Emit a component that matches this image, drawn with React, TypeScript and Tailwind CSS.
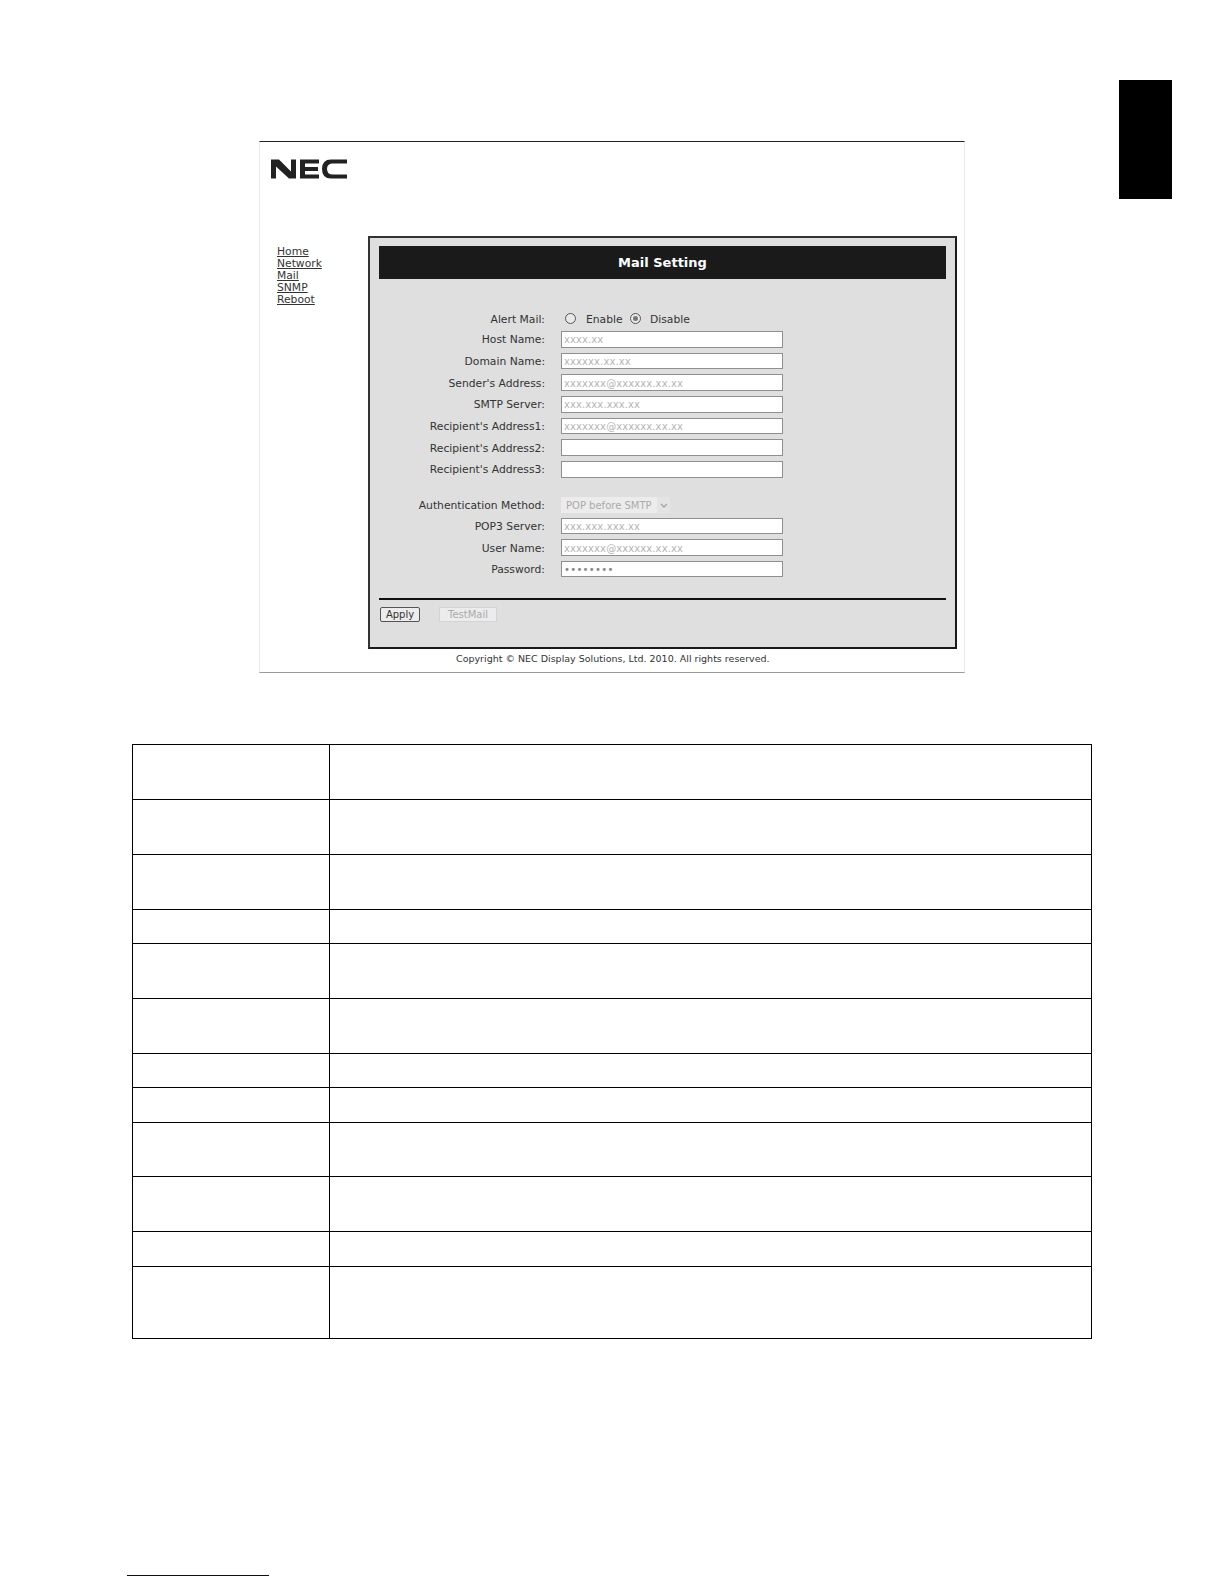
const font = "font-['DejaVu_Sans',sans-serif]";

const topFields = [
  { label: 'Host Name:', value: 'xxxx.xx' },
  { label: 'Domain Name:', value: 'xxxxxx.xx.xx' },
  { label: "Sender's Address:", value: 'xxxxxxx@xxxxxx.xx.xx' },
  { label: 'SMTP Server:', value: 'xxx.xxx.xxx.xx' },
  { label: "Recipient's Address1:", value: 'xxxxxxx@xxxxxx.xx.xx' },
  { label: "Recipient's Address2:", value: '' },
  { label: "Recipient's Address3:", value: '' },
];

const authFields = [
  { label: 'POP3 Server:', value: 'xxx.xxx.xxx.xx' },
  { label: 'User Name:', value: 'xxxxxxx@xxxxxx.xx.xx' },
  { label: 'Password:', value: '••••••••', dark: true },
];

const navLinks = ['Home', 'Network', 'Mail', 'SNMP', 'Reboot'];

const rowHeights = [
  'h-[55px]',
  'h-[55px]',
  'h-[55px]',
  'h-[34px]',
  'h-[55px]',
  'h-[55px]',
  'h-[34px]',
  'h-[35px]',
  'h-[54px]',
  'h-[55px]',
  'h-[35px]',
  'h-[72px]',
];

function NecLogo() {
  return (
    <svg viewBox="0 0 77 20" className="w-[77px] h-[20px] block" fill="#222">
      <path d="M0 .5H8L20 12.5V.5H25V19.5H18L5 7.5V19.5H0Z" />
      <path d="M29 .5H48V4.5H34V8H47V12H34V15.5H48V19.5H29Z" />
      <path d="M76 4.5H62Q56 4.5 56 10Q56 15.500 62 15.500H76V19.500H60Q51 19.500 51 10Q51 .5 60 .5H76Z" />
    </svg>
  );
}

function Field({ label, value, dark }: { label: string; value: string; dark?: boolean }) {
  return (
    <div className="flex items-center h-[21.67px]">
      <span className="w-[166px] pt-[2px] text-right text-[10.750px] text-[#333] whitespace-nowrap">{label}</span>
      <input
        readOnly
        value={value}
        className={`ml-[16px] w-[222px] h-[16.500px] bg-white border border-[#8f8f8f] px-[2px] pt-px text-[10px] outline-none ${
          dark ? 'text-[#888] tracking-[0.3px]' : 'text-[#b5b5b5] tracking-[0.1px]'
        }`}
      />
    </div>
  );
}

function Radio({ checked }: { checked?: boolean }) {
  return (
    <span className="flex items-center justify-center w-[11px] h-[11px] rounded-full border border-[#555] bg-[#e9e9e9]">
      {checked && <span className="w-[5px] h-[5px] rounded-full bg-[#777]" />}
    </span>
  );
}

export default function App() {
  return (
    <div className={`relative w-[1224px] h-[1584px] bg-white overflow-hidden ${font}`}>
      <div className="flex items-start">
        <div className="ml-[259px] mt-[141px] w-[706px] h-[532px] border-t border-t-[#222] border-b border-b-[#999] border-x border-x-[#eaeaea] flex flex-col">
          <div className="h-[94px] pl-[11px] pt-[17px]">
            <NecLogo />
          </div>
          <div className="flex">
            <nav className="w-[108px] pl-[17px] pt-[10px] flex flex-col">
              {navLinks.map((link) => (
                <a key={link} className="h-[12px] leading-[12px] text-[10.750px] text-[#333] underline self-start">
                  {link}
                </a>
              ))}
            </nav>
            <div className="flex flex-col">
              <div className="w-[589px] h-[413px] border-2 border-[#1a1a1a] border-t-[#333] border-l-[#333] bg-[#dfdfdf] pt-[8px] px-[9px]">
                <div className="h-[33px] bg-[#1a1a1a] flex items-center justify-center">
                  <span className="text-[13px] font-bold text-white">Mail Setting</span>
                </div>
                <div className="mt-[30px] flex items-center h-[19.500px]">
                  <span className="w-[166px] pt-[2px] text-right text-[10.750px] text-[#333]">Alert Mail:</span>
                  <span className="ml-[20px]">
                    <Radio />
                  </span>
                  <span className="ml-[10px] pt-[2px] w-[44px] text-[10.750px] text-[#333]">Enable</span>
                  <Radio checked />
                  <span className="ml-[9px] pt-[2px] text-[10.750px] text-[#333]">Disable</span>
                </div>
                {topFields.map((field) => (
                  <Field key={field.label} label={field.label} value={field.value} />
                ))}
                <div className="mt-[15px] flex items-center h-[20px]">
                  <span className="w-[166px] pt-[2px] text-right text-[10.750px] text-[#333] whitespace-nowrap">
                    Authentication Method:
                  </span>
                  <div className="ml-[16px] w-[109px] h-[16px] bg-[#ececec] flex items-center">
                    <span className="w-[94px] pl-[5px] text-[10px] text-[#aaa] whitespace-nowrap">POP before SMTP</span>
                    <span className="ml-[2px] w-[13px] h-full bg-[#e4e4e4] flex items-center justify-center">
                      <svg viewBox="0 0 8 5" className="w-[8px] h-[5px]" fill="none" stroke="#aaa" strokeWidth="1.500">
                        <path d="M1 1l3 3 3-3" />
                      </svg>
                    </span>
                  </div>
                </div>
                {authFields.map((field) => (
                  <Field key={field.label} label={field.label} value={field.value} dark={field.dark} />
                ))}
                <div className="mt-[18px] h-[2px] bg-[#111]" />
                <div className="mt-[7px] flex items-center">
                  <button className="ml-[1px] w-[40px] h-[15px] leading-[13px] border border-[#555] rounded-[2px] bg-[#ececec] text-[10px] text-[#333]">
                    Apply
                  </button>
                  <button className="ml-[19px] w-[58px] h-[15px] leading-[13px] border border-[#d4d4d4] bg-[#ececec] text-[10px] text-[#aaa]">
                    TestMail
                  </button>
                </div>
              </div>
              <p className="mt-[4px] ml-[88px] text-[9.500px] leading-[12px] text-[#333] whitespace-nowrap">
                Copyright © NEC Display Solutions, Ltd. 2010. All rights reserved.
              </p>
            </div>
          </div>
        </div>
        <div className="ml-[154px] mt-[80px] w-[53px] h-[119px] bg-black" />
      </div>
      <div className="ml-[132px] mt-[71px] w-[960px] border-t border-l border-r border-black">
        {rowHeights.map((height, index) => (
          <div key={index} className={`flex border-b border-black ${height}`}>
            <div className="w-[197px] border-r border-black" />
            <div className="flex-1" />
          </div>
        ))}
      </div>
      <div className="ml-[127px] mt-[236px] w-[142px] h-px bg-[#000080]" />
    </div>
  );
}
